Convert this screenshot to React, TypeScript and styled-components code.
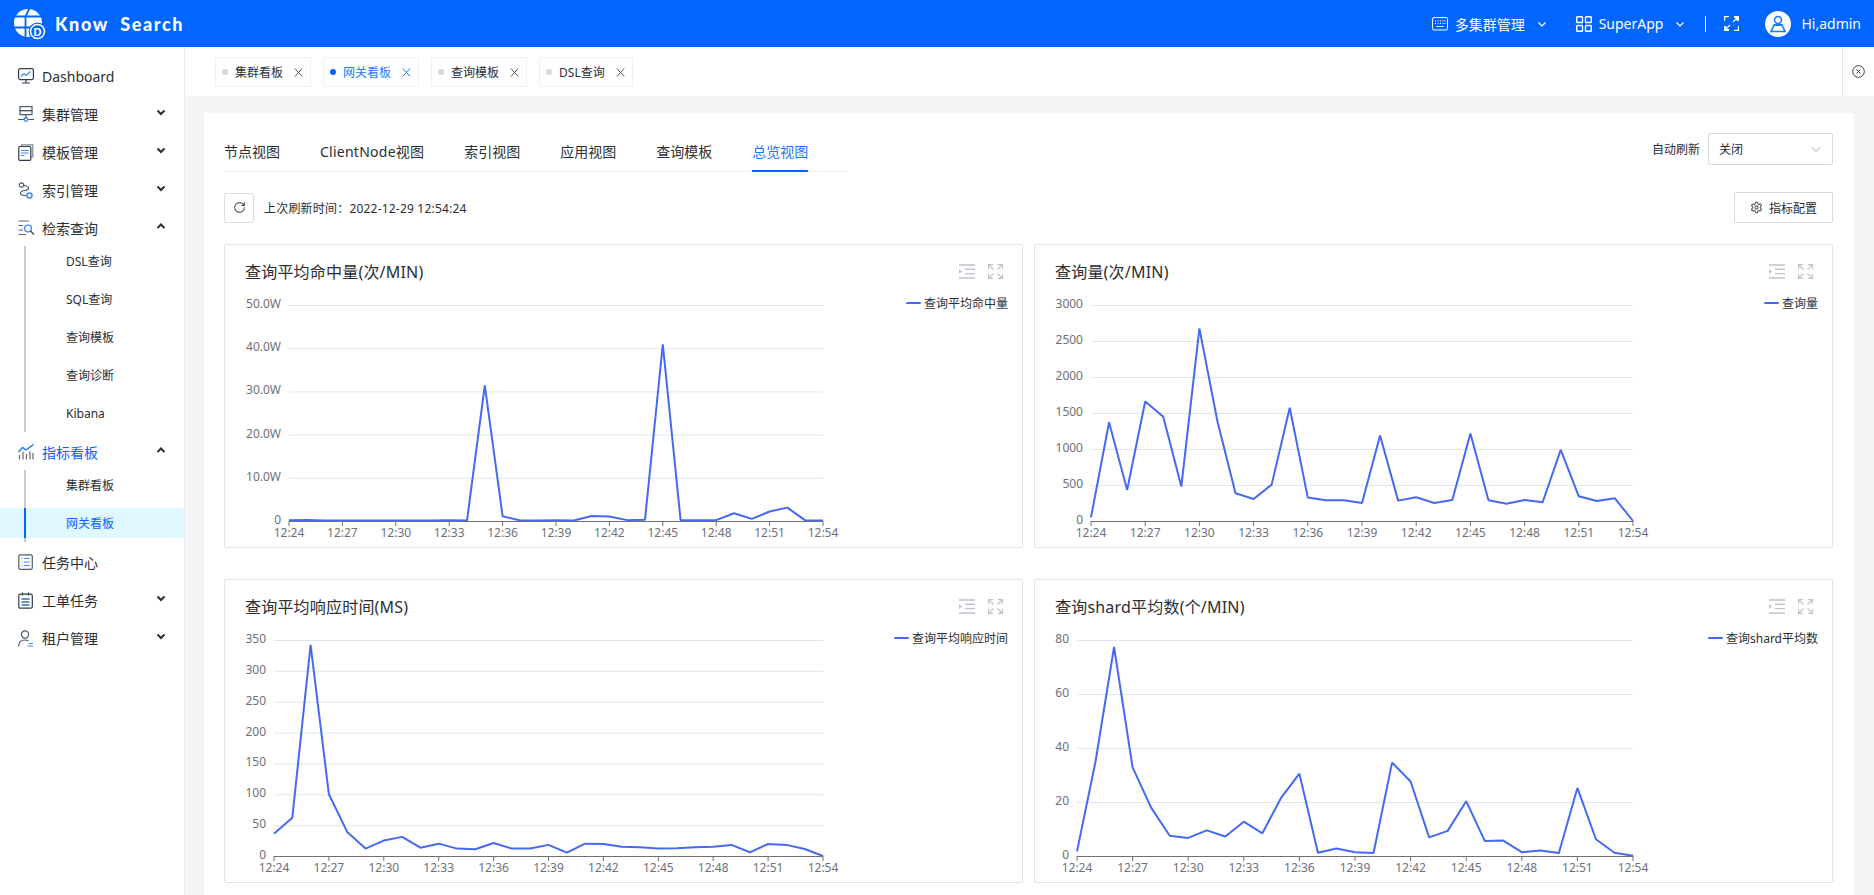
import * as React from 'react'
import styled, { createGlobalStyle } from 'styled-components'
import { RotateCw, Settings } from 'lucide-react'

const BLUE = '#0066ff'
const LINE = '#4669f2'
const INK = '#2a2e35'
const FONT = `"Noto Sans", "Noto Sans CJK SC", sans-serif`

const GlobalStyle = createGlobalStyle`
  html, body {
    margin: 0;
    padding: 0;
    height: 100%;
    overflow: hidden;
    background: #f5f5f5;
    font-family: ${FONT};
    color: ${INK};
  }
  * {
    box-sizing: border-box;
  }
`

const Page = styled.div`
  width: 1874px;
  height: 895px;
  overflow: hidden;
  display: flex;
  flex-direction: column;
`

const TopBar = styled.header`
  flex: none;
  height: 47px;
  background: ${BLUE};
  color: #fff;
  display: flex;
  align-items: center;
  padding-left: 14px;
`

const BrandName = styled.div`
  margin-left: 9px;
  font-family: "Lato", sans-serif;
  font-size: 18px;
  font-weight: 900;
  letter-spacing: 1.6px;
  white-space: pre;
`

const TopMenu = styled.div`
  margin-left: auto;
  display: flex;
  align-items: center;
  font-size: 14px;
  padding-right: 13px;
`

const TopEntry = styled.div<{ $right: number }>`
  display: flex;
  align-items: center;
  gap: 7px;
  margin-right: ${p => p.$right}px;
`

const TopChevron = styled.span`
  display: flex;
  margin-left: 5px;
`

const TopDivider = styled.div`
  width: 1px;
  height: 16px;
  background: #fff;
  margin-right: 18px;
`

const Avatar = styled.div`
  width: 26px;
  height: 26px;
  border-radius: 50%;
  background: #fff;
  display: flex;
  align-items: center;
  justify-content: center;
  margin-right: 10px;
`

const Body = styled.div`
  flex: 1;
  display: flex;
  min-height: 0;
`

const SideBar = styled.nav`
  flex: none;
  width: 185px;
  background: #fff;
  border-right: 1px solid #e6ebf0;
  padding-top: 15px;
`

const NavRow = styled.div<{ $active?: boolean; $flush?: boolean }>`
  height: 28px;
  margin-bottom: ${p => (p.$flush ? 0 : 10)}px;
  padding: 0 18px 0 18px;
  display: flex;
  align-items: center;
  font-size: 14px;
  color: ${p => (p.$active ? BLUE : INK)};
`

const NavIcon = styled.span`
  width: 24px;
  height: 18px;
  flex: none;
  display: flex;
  align-items: center;
`

const NavChevron = styled.span`
  margin-left: auto;
  display: flex;
  margin-top: -4px;
`

const SubList = styled.div`
  margin-bottom: 6px;
`

const SubItem = styled.div`
  position: relative;
  padding: 4px 0;

  &::before {
    content: '';
    position: absolute;
    left: 24px;
    width: 2px;
    top: 0;
    bottom: 0;
    background: #c8cdd0;
  }

  &:first-child::before {
    top: 4px;
  }
`

const SubLabel = styled.div<{ $active?: boolean }>`
  position: relative;
  height: 30px;
  line-height: 31px;
  padding-left: 66px;
  font-size: 12px;
  color: ${p => (p.$active ? BLUE : INK)};
  background: ${p => (p.$active ? '#e0f8ff' : 'transparent')};

  &::before {
    content: '';
    display: ${p => (p.$active ? 'block' : 'none')};
    position: absolute;
    left: 24px;
    top: 0;
    bottom: 0;
    width: 2px;
    background: ${BLUE};
  }
`

const Main = styled.main`
  flex: 1;
  min-width: 0;
  display: flex;
  flex-direction: column;
`

const TagBar = styled.div`
  flex: none;
  height: 49px;
  background: #fff;
  display: flex;
`

const TagList = styled.div`
  flex: 1;
  display: flex;
  gap: 12px;
  padding: 10px 0 0 30px;
`

const Tag = styled.div<{ $active?: boolean }>`
  height: 30px;
  padding: 0 7px 0 6px;
  border: 1px solid #f0f0f0;
  display: flex;
  align-items: center;
  font-size: 12px;
  color: ${p => (p.$active ? '#1a7af8' : INK)};
`

const TagDot = styled.span<{ $active?: boolean }>`
  width: 6px;
  height: 6px;
  border-radius: 50%;
  margin-right: 7px;
  background: ${p => (p.$active ? BLUE : '#d9d9d9')};
`

const TagClose = styled.span`
  display: flex;
  margin-left: 11px;
`

const TagBarEnd = styled.div`
  flex: none;
  width: 32px;
  border-left: 1px solid #dfe7ef;
  display: flex;
  align-items: center;
  justify-content: center;
`

const Content = styled.div`
  flex: 1;
  min-height: 0;
  padding: 17px 20px 0 19px;
`

const Panel = styled.section`
  background: #fff;
  padding: 20px 21px 0 20px;
  height: 900px;
`

const PanelHead = styled.div`
  display: flex;
  justify-content: space-between;
`

const Tabs = styled.div`
  width: 623px;
  height: 39px;
  display: flex;
  border-bottom: 1px solid #f0f0f0;
`

const TabItem = styled.div<{ $active?: boolean; $latin?: boolean }>`
  flex: none;
  height: 39px;
  line-height: 38px;
  margin-right: 40px;
  font-size: 14px;
  white-space: nowrap;
  letter-spacing: ${p => (p.$latin ? '0.25px' : 'normal')};
  color: ${p => (p.$active ? '#1a7af8' : INK)};
  border-bottom: 2px solid ${p => (p.$active ? BLUE : 'transparent')};

  &:last-child {
    margin-right: 0;
  }
`

const AutoRefresh = styled.div`
  display: flex;
  align-items: center;
  height: 32px;
  gap: 8px;
  font-size: 12px;
`

const SelectBox = styled.div`
  width: 125px;
  height: 32px;
  border: 1px solid #d9d9d9;
  border-radius: 2px;
  padding: 0 10px;
  display: flex;
  align-items: center;
  justify-content: space-between;
  font-size: 12px;
`

const ToolRow = styled.div`
  margin-top: 20px;
  height: 31px;
  display: flex;
  align-items: center;
  font-size: 12px;
`

const RefreshButton = styled.button`
  width: 30px;
  height: 30px;
  padding: 0;
  background: #fff;
  border: 1px solid #d9dfe3;
  border-radius: 2px;
  display: flex;
  align-items: center;
  justify-content: center;
  color: #555;
  margin-right: 10px;
`

const RefreshTime = styled.span`
  letter-spacing: 0.2px;
`

const ConfigButton = styled.button`
  margin-left: auto;
  width: 99px;
  height: 31px;
  padding: 0;
  background: #fff;
  border: 1px solid #d9d9d9;
  border-radius: 2px;
  display: flex;
  align-items: center;
  justify-content: center;
  gap: 6px;
  font: inherit;
  color: ${INK};
`

const ChartGrid = styled.div`
  margin-top: 21px;
  display: grid;
  grid-template-columns: 1fr 1fr;
  column-gap: 11px;
  row-gap: 31px;
`

const ChartCard = styled.div`
  height: 304px;
  border: 1px solid #dde2e8;
  border-radius: 2px;
`

const ChartHead = styled.div`
  height: 45px;
  padding: 8px 19px 0 20px;
  display: flex;
  align-items: center;
  justify-content: space-between;
`

const ChartTitle = styled.div`
  margin-top: -2px;
  font-size: 16px;
  letter-spacing: 0.2px;
  color: ${INK};
`

const ChartTools = styled.div`
  display: flex;
  gap: 13px;
  color: #bfc4cc;
`

const ChartBody = styled.div`
  display: flex;
  justify-content: space-between;
`

const Legend = styled.div`
  margin: 5px 14px 0 0;
  height: 16px;
  display: flex;
  align-items: center;
  gap: 3px;
  font-size: 12px;
  color: ${INK};
`

const LegendLine = styled.span`
  width: 15px;
  height: 2px;
  border-radius: 1px;
  background: ${LINE};
`

const AxisText = styled.text`
  font-family: ${FONT};
  font-size: 12px;
  fill: #6e7079;
`

const Chevron: React.FC<{ up?: boolean; color?: string; size?: number; weight?: number }> = ({ up, color = '#2b2f36', size = 10, weight = 2 }) => (
  <svg width={size} height={size} viewBox="0 0 10 10" fill="none" stroke={color} strokeWidth={weight}>
    <path d={up ? 'M1.5 7L5 3.5 8.5 7' : 'M1.5 3.5L5 7 8.5 3.5'} />
  </svg>
)

const Logo = () => (
  <svg width="32" height="32" viewBox="0 0 32 32">
    <circle cx="14" cy="15" r="14" fill="#fff" />
    <g stroke={BLUE} strokeWidth="1.800" fill="none">
      <path d="M0 8.500H28M0 19.500H22" />
      <path d="M11.500 32V8.500L15.500 0" />
    </g>
    <circle cx="23.500" cy="23.500" r="9" fill={BLUE} />
    <circle cx="23.500" cy="23.500" r="7" fill="none" stroke="#fff" strokeWidth="1.600" />
    <text x="23.500" y="27.500" textAnchor="middle" fontSize="11" fontWeight="700" fontFamily="Liberation Sans" fill="#fff">D</text>
  </svg>
)

const KeyboardIcon = () => (
  <svg width="16" height="14" viewBox="0 0 16 14" fill="none" stroke="#fff">
    <rect x="0.500" y="0.500" width="15" height="12.500" rx="1.500" />
    <path d="M3 4h1M5.500 4h1M8 4h1M10.500 4h1M12.500 4h1M3 6.500h1M5.500 6.500h1M8 6.500h1M10.500 6.500h1M12.500 6.500h1M4.500 9.500h7" />
  </svg>
)

const GridIcon = () => (
  <svg width="16" height="16" viewBox="0 0 16 16" fill="none" stroke="#fff" strokeWidth="1.400">
    <rect x="0.700" y="0.700" width="5.800" height="5.800" rx="0.800" />
    <rect x="9.500" y="0.700" width="5.800" height="5.800" rx="0.800" />
    <rect x="0.700" y="9.500" width="5.800" height="5.800" rx="0.800" />
    <rect x="9.500" y="9.500" width="5.800" height="5.800" rx="0.800" />
  </svg>
)

const ExpandIcon = () => (
  <svg width="15" height="15" viewBox="0 0 15 15" fill="none" stroke="#fff" strokeWidth="1.200">
    <path d="M0.600 5V0.600H5M10 0.600H14.400V5M0.600 10V14.400H5M10 14.400H14.400V10M9 6L13.500 1.500M10 1.500H13.500V5M6 9L1.500 13.500M1.500 10V13.500H5" />
  </svg>
)

const UserBadge = () => (
  <svg width="18" height="20" viewBox="0 0 18 20" fill="none" stroke="#1a7af8" strokeWidth="1.600">
    <circle cx="9" cy="6" r="3.500" />
    <path d="M5 11H13L16 17.500H2Z" />
    <path d="M5 11H13" strokeWidth="2" />
  </svg>
)

const DashboardIcon = () => (
  <svg width="16" height="16" viewBox="0 0 16 16" fill="none" stroke="#2c3e50" strokeWidth="1.200">
    <rect x="0.600" y="0.600" width="14.800" height="11" rx="1.500" />
    <path d="M3 8.500L6 5.500 8 7.500 12.500 3.500" stroke="#3b8cf6" />
    <path d="M4 15H12M8 12V15" />
  </svg>
)

const ClusterIcon = () => (
  <svg width="16" height="17" viewBox="0 0 16 17" fill="none" stroke="#4d5a68" strokeWidth="1.200">
    <rect x="2" y="0.600" width="12" height="4" />
    <rect x="2" y="4.600" width="12" height="4" />
    <path d="M8 9V13M0 13.500H6M10 13.500H16" />
    <circle cx="8" cy="13.500" r="1.800" stroke="#3b8cf6" />
  </svg>
)

const TemplateIcon = () => (
  <svg width="16" height="17" viewBox="0 0 16 17" fill="none" stroke="#2c3e50" strokeWidth="1.200">
    <path d="M3.500 2.500V0.800H14.800V13H13" stroke="#7c8794" />
    <rect x="0.800" y="2.500" width="12" height="13.800" rx="1" />
    <path d="M3 6.500H10.500M3 9H10.500M3 11.500H6.500" stroke="#3b8cf6" />
  </svg>
)

const IndexIcon = () => (
  <svg width="16" height="17" viewBox="0 0 16 17" fill="none" stroke="#4d5a68" strokeWidth="1.200">
    <circle cx="3.500" cy="3" r="2.200" />
    <path d="M5.500 3.500C12 4 12 8 7 8.500C1 9 1 13.500 6 13.500H9" />
    <circle cx="11.500" cy="13.500" r="2.500" stroke="#3b8cf6" strokeWidth="1.600" />
  </svg>
)

const SearchListIcon = () => (
  <svg width="17" height="16" viewBox="0 0 17 16" fill="none" stroke="#5d6975" strokeWidth="1.200">
    <path d="M0.500 1H11M0.500 5.500H5M0.500 10H5M0.500 14.500H8" />
    <circle cx="10" cy="8.500" r="3.400" stroke="#3b8cf6" strokeWidth="1.400" />
    <path d="M12.500 11L16 14.500" stroke="#2c3e50" />
  </svg>
)

const MetricIcon = () => (
  <svg width="16" height="16" viewBox="0 0 16 16" fill="none" stroke="#5d6975" strokeWidth="1.200">
    <path d="M0.500 8L4.500 3.500 8 6 15.500 0.500" stroke="#1a7af8" strokeWidth="1.400" />
    <path d="M1.500 15.500V11M5 15.500V8M8.500 15.500V10M12 15.500V7.500M15 15.500V9" />
  </svg>
)

const TaskIcon = () => (
  <svg width="16" height="16" viewBox="0 0 16 16" fill="none" stroke="#4d5a68" strokeWidth="1.200">
    <rect x="0.800" y="0.800" width="13.500" height="14.500" rx="1.500" />
    <path d="M3.500 4.500H4.500M6 4.500H12M3.500 8H4.500M6 8H12M3.500 11.500H4.500M6 11.500H12" stroke="#3b8cf6" />
  </svg>
)

const WorkOrderIcon = () => (
  <svg width="16" height="17" viewBox="0 0 16 17" fill="none" stroke="#2c3e50" strokeWidth="1.200">
    <rect x="0.800" y="2.200" width="13.500" height="14" rx="1.500" />
    <path d="M4.500 0.500V3.500M10.500 0.500V3.500" />
    <path d="M3.500 7H11.500M3.500 10H11.500M3.500 13H11.500" stroke="#3b6fb6" strokeWidth="1.500" />
  </svg>
)

const TenantIcon = () => (
  <svg width="16" height="17" viewBox="0 0 16 17" fill="none" stroke="#4d5a68" strokeWidth="1.200">
    <circle cx="7" cy="4.500" r="3.600" />
    <path d="M0.600 16.500C0.600 12 3.500 10 7 10C8.500 10 9.500 10.500 10.500 11" />
    <path d="M11 13.500H15M9.500 16H15" stroke="#3b8cf6" />
  </svg>
)

const TagCross: React.FC<{ color: string }> = ({ color }) => (
  <svg width="9" height="9" viewBox="0 0 9 9" fill="none" stroke={color} strokeWidth="1">
    <path d="M0.800 0.500L8.200 8.500M8.200 0.500L0.800 8.500" />
  </svg>
)

const CircleClose = () => (
  <svg width="13" height="13" viewBox="0 0 13 13" fill="none" stroke="#3a3f45" strokeWidth="1">
    <circle cx="6.500" cy="6.500" r="5.800" />
    <path d="M4.500 4.500L8.500 8.500M8.500 4.500L4.500 8.500" />
  </svg>
)

const IndentTool = () => (
  <svg width="16" height="15" viewBox="0 0 16 15" fill="none" stroke="currentColor" strokeWidth="1.400">
    <path d="M0 1H16M6 5.300H16M6 9.600H16M0 14H16" />
    <path d="M0 5L3 7.500 0 10Z" fill="currentColor" stroke="none" />
  </svg>
)

const FullTool = () => (
  <svg width="15" height="15" viewBox="0 0 15 15" fill="none" stroke="currentColor" strokeWidth="1.200">
    <path d="M0.600 5V0.600H5M10 0.600H14.400V5M0.600 10V14.400H5M10 14.400H14.400V10" />
    <path d="M1 1L5.500 5.500M14 1L9.500 5.500M1 14L5.500 9.500M14 14L9.500 9.500" />
  </svg>
)

const TIMES = ['12:24', '12:27', '12:30', '12:33', '12:36', '12:39', '12:42', '12:45', '12:48', '12:51', '12:54']

interface ChartProps {
  title: string
  legend: string
  max: number
  step: number
  unit?: string
  left: number
  data: number[]
}

const PLOT_RIGHT = 598
const PLOT_TOP = 15
const PLOT_BOTTOM = 231

const LineChart: React.FC<ChartProps> = ({ title, legend, max, step, unit, left, data }) => {
  const x = (i: number) => left + (i * (PLOT_RIGHT - left)) / 30
  const y = (v: number) => PLOT_BOTTOM - (v / max) * (PLOT_BOTTOM - PLOT_TOP)
  const ticks: number[] = []
  for (let v = 0; v <= max; v += step) ticks.push(v)

  return (
    <ChartCard>
      <ChartHead>
        <ChartTitle>{title}</ChartTitle>
        <ChartTools>
          <IndentTool />
          <FullTool />
        </ChartTools>
      </ChartHead>
      <ChartBody>
        <svg width="620" height="255">
          {ticks.slice(1).map(v => (
            <line key={v} x1={left} x2={PLOT_RIGHT} y1={y(v) + 0.5} y2={y(v) + 0.5} stroke="#e0e6f1" />
          ))}
          {ticks.map(v => (
            <AxisText key={v} x={left - 8} y={y(v) + 3} textAnchor="end">
              {v === 0 || !unit ? v : `${v.toFixed(1)}${unit}`}
            </AxisText>
          ))}
          <polyline
            points={data.map((v, i) => `${x(i)},${y(v)}`).join(' ')}
            fill="none"
            stroke={LINE}
            strokeWidth="2"
            strokeLinejoin="bevel"
          />
          <line x1={left} x2={PLOT_RIGHT} y1={PLOT_BOTTOM + 0.5} y2={PLOT_BOTTOM + 0.5} stroke="#6e7079" />
          {TIMES.map((t, i) => (
            <React.Fragment key={t}>
              <line x1={x(i * 3)} x2={x(i * 3)} y1={PLOT_BOTTOM} y2={PLOT_BOTTOM + 5} stroke="#6e7079" />
              <AxisText x={x(i * 3)} y={PLOT_BOTTOM + 16} textAnchor="middle">{t}</AxisText>
            </React.Fragment>
          ))}
        </svg>
        <Legend>
          <LegendLine />
          {legend}
        </Legend>
      </ChartBody>
    </ChartCard>
  )
}

const CHARTS: ChartProps[] = [
  {
    title: '查询平均命中量(次/MIN)',
    legend: '查询平均命中量',
    max: 50,
    step: 10,
    unit: 'W',
    left: 64,
    data: [0.15, 0.25, 0.1, 0.1, 0.1, 0.1, 0.1, 0.1, 0.1, 0.2, 0.1, 31.4, 1.1, 0.1, 0.1, 0.2, 0.1, 1.15, 1.05, 0.2, 0.3, 40.9, 0.2, 0.2, 0.2, 1.8, 0.5, 2.2, 3.1, 0.15, 0.1],
  },
  {
    title: '查询量(次/MIN)',
    legend: '查询量',
    max: 3000,
    step: 500,
    left: 56,
    data: [51, 1372, 431, 1660, 1447, 478, 2675, 1382, 385, 306, 505, 1572, 325, 287, 287, 250, 1187, 283, 329, 250, 292, 1215, 287, 241, 292, 260, 988, 343, 278, 315, 0],
  },
  {
    title: '查询平均响应时间(MS)',
    legend: '查询平均响应时间',
    max: 350,
    step: 50,
    left: 49,
    data: [36, 62, 342, 100, 39, 12, 25, 31, 13.5, 20, 12, 11, 21, 12, 12, 18, 5.4, 20, 19.5, 15, 14, 12, 12.4, 14, 15, 18, 6, 19.5, 18, 11.4, 0],
  },
  {
    title: '查询shard平均数(个/MIN)',
    legend: '查询shard平均数',
    max: 80,
    step: 20,
    left: 42,
    data: [1.7, 35, 77.4, 32.8, 17.9, 7.5, 6.7, 9.5, 7.2, 12.7, 8.4, 21.4, 30.5, 1.2, 2.8, 1.4, 1.1, 34.6, 27.6, 6.9, 9.3, 20.3, 5.6, 5.7, 1.4, 2, 1.1, 25.2, 6.2, 1.2, 0.1],
  },
]

const TAGS = ['集群看板', '网关看板', '查询模板', 'DSL查询']
const TABS = ['节点视图', 'ClientNode视图', '索引视图', '应用视图', '查询模板', '总览视图']

export default function App() {
  return (
    <Page>
      <GlobalStyle />
      <TopBar>
        <Logo />
        <BrandName>{'Know  Search'}</BrandName>
        <TopMenu>
          <TopEntry $right={29}>
            <KeyboardIcon />
            多集群管理
            <TopChevron><Chevron color="#fff" size={10} weight={1.2} /></TopChevron>
          </TopEntry>
          <TopEntry $right={20}>
            <GridIcon />
            SuperApp
            <TopChevron><Chevron color="#fff" size={10} weight={1.2} /></TopChevron>
          </TopEntry>
          <TopDivider />
          <TopEntry $right={26}>
            <ExpandIcon />
          </TopEntry>
          <Avatar>
            <UserBadge />
          </Avatar>
          Hi,admin
        </TopMenu>
      </TopBar>
      <Body>
        <SideBar>
          <NavRow>
            <NavIcon><DashboardIcon /></NavIcon>
            Dashboard
          </NavRow>
          <NavRow>
            <NavIcon><ClusterIcon /></NavIcon>
            集群管理
            <NavChevron><Chevron /></NavChevron>
          </NavRow>
          <NavRow>
            <NavIcon><TemplateIcon /></NavIcon>
            模板管理
            <NavChevron><Chevron /></NavChevron>
          </NavRow>
          <NavRow>
            <NavIcon><IndexIcon /></NavIcon>
            索引管理
            <NavChevron><Chevron /></NavChevron>
          </NavRow>
          <NavRow $flush>
            <NavIcon><SearchListIcon /></NavIcon>
            检索查询
            <NavChevron><Chevron up /></NavChevron>
          </NavRow>
          <SubList>
            {['DSL查询', 'SQL查询', '查询模板', '查询诊断', 'Kibana'].map(label => (
              <SubItem key={label}><SubLabel>{label}</SubLabel></SubItem>
            ))}
          </SubList>
          <NavRow $active $flush>
            <NavIcon><MetricIcon /></NavIcon>
            指标看板
            <NavChevron><Chevron up /></NavChevron>
          </NavRow>
          <SubList>
            <SubItem><SubLabel>集群看板</SubLabel></SubItem>
            <SubItem><SubLabel $active>网关看板</SubLabel></SubItem>
          </SubList>
          <NavRow>
            <NavIcon><TaskIcon /></NavIcon>
            任务中心
          </NavRow>
          <NavRow>
            <NavIcon><WorkOrderIcon /></NavIcon>
            工单任务
            <NavChevron><Chevron /></NavChevron>
          </NavRow>
          <NavRow>
            <NavIcon><TenantIcon /></NavIcon>
            租户管理
            <NavChevron><Chevron /></NavChevron>
          </NavRow>
        </SideBar>
        <Main>
          <TagBar>
            <TagList>
              {TAGS.map(tag => {
                const active = tag === '网关看板'
                return (
                  <Tag key={tag} $active={active}>
                    <TagDot $active={active} />
                    {tag}
                    <TagClose><TagCross color={active ? '#1a7af8' : '#555'} /></TagClose>
                  </Tag>
                )
              })}
            </TagList>
            <TagBarEnd><CircleClose /></TagBarEnd>
          </TagBar>
          <Content>
            <Panel>
              <PanelHead>
                <Tabs>
                  {TABS.map(tab => (
                    <TabItem key={tab} $active={tab === '总览视图'} $latin={tab === 'ClientNode视图'}>{tab}</TabItem>
                  ))}
                </Tabs>
                <AutoRefresh>
                  自动刷新
                  <SelectBox>
                    关闭
                    <Chevron color="#c4c8cc" size={12} weight={1} />
                  </SelectBox>
                </AutoRefresh>
              </PanelHead>
              <ToolRow>
                <RefreshButton><RotateCw size={13} /></RefreshButton>
                <RefreshTime>上次刷新时间：2022-12-29 12:54:24</RefreshTime>
                <ConfigButton>
                  <Settings size={13} color="#555" />
                  指标配置
                </ConfigButton>
              </ToolRow>
              <ChartGrid>
                {CHARTS.map(chart => (
                  <LineChart key={chart.title} {...chart} />
                ))}
              </ChartGrid>
            </Panel>
          </Content>
        </Main>
      </Body>
    </Page>
  )
}
